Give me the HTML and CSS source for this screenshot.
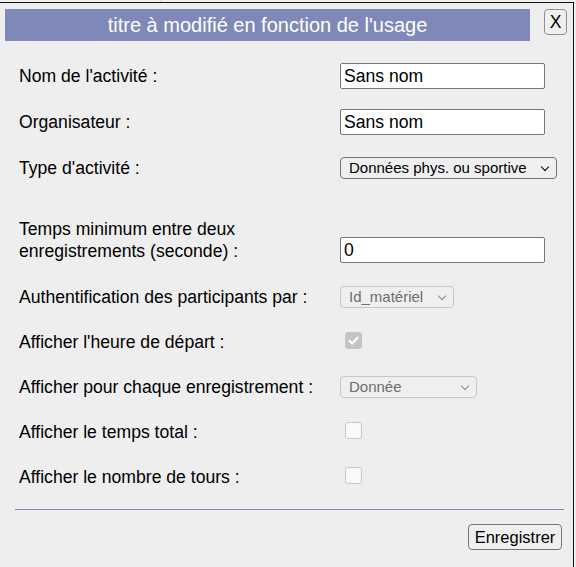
FILE: index.html
```html
<!DOCTYPE html>
<html lang="fr">
<head>
<meta charset="utf-8">
<title>Activité</title>
<link rel="stylesheet" href="styles.css">
</head>
<body>
<div class="topstrip"><span class="tick"></span></div>
<div class="dialog">
  <div class="header">
    <div class="title">titre à modifié en fonction de l'usage</div>
    <button class="close">X</button>
  </div>
  <form class="form">
    <div class="row">
      <label class="lbl">Nom de l'activité :</label>
      <input class="txt" type="text" value="Sans nom">
    </div>
    <div class="row">
      <label class="lbl">Organisateur :</label>
      <input class="txt" type="text" value="Sans nom">
    </div>
    <div class="row">
      <label class="lbl">Type d'activité :</label>
      <div class="sel sel-type">Données phys. ou sportive<span class="chev"></span></div>
    </div>
    <div class="row row-two">
      <label class="lbl lbl-two">Temps minimum entre deux enregistrements (seconde) :</label>
      <input class="txt" type="text" value="0">
    </div>
    <div class="row row-s">
      <label class="lbl">Authentification des participants par :</label>
      <div class="sel sel-dis sel-id">Id_matériel<span class="chev"></span></div>
    </div>
    <div class="row row-s">
      <label class="lbl">Afficher l'heure de départ :</label>
      <span class="cb cb-checked"><svg viewBox="0 0 17 17" width="17" height="17"><path d="M4.5 8.8 L7.3 11.5 L12.6 5.6" fill="none" stroke="#fff" stroke-width="2.2" stroke-linecap="round" stroke-linejoin="round"/></svg></span>
    </div>
    <div class="row row-s">
      <label class="lbl">Afficher pour chaque enregistrement :</label>
      <div class="sel sel-dis sel-don">Donnée<span class="chev"></span></div>
    </div>
    <div class="row row-s">
      <label class="lbl">Afficher le temps total :</label>
      <span class="cb"></span>
    </div>
    <div class="row row-s">
      <label class="lbl">Afficher le nombre de tours :</label>
      <span class="cb"></span>
    </div>
    <div class="sep"></div>
    <div class="footer">
      <button type="button" class="save">Enregistrer</button>
    </div>
  </form>
</div>
</body>
</html>
```
FILE: styles.css
```css
html, body {
  margin: 0;
  padding: 0;
}
body {
  background: #f0f0f0;
  font-family: "Liberation Sans", Arial, sans-serif;
  width: 576px;
  height: 567px;
  overflow: hidden;
}
.topstrip {
  height: 2px;
  position: relative;
}
.topstrip .tick {
  position: absolute;
  left: 161px;
  top: 0;
  width: 1px;
  height: 2px;
  background: #c8c8c8;
}
.dialog {
  width: 574px;
  height: 570px;
  background: #eeeeee;
  border-top: 1px solid #111;
  border-right: 1px solid #111;
  box-sizing: border-box;
}
.header {
  display: flex;
  align-items: flex-start;
  padding-top: 6px;
}
.title {
  margin-left: 5px;
  width: 525px;
  height: 32px;
  background: #7f89b8;
  color: #fff;
  font-size: 20px;
  line-height: 32px;
  text-align: center;
}
.close {
  margin-left: 14px;
  width: 23px;
  height: 26px;
  padding: 0;
  border: 1px solid #8f8f8f;
  border-radius: 4px;
  background: #efefef;
  font-family: "Liberation Sans", Arial, sans-serif;
  font-size: 17.6px;
  color: #000;
  line-height: 24px;
}
.form {
  margin: 12px 0 0 0;
}
.row {
  display: flex;
  align-items: center;
  height: 46px;
}
.row-s {
  height: 45px;
}
.lbl {
  width: 340px;
  padding-left: 19px;
  box-sizing: border-box;
  flex: none;
  font-size: 17.6px;
  color: #000;
  line-height: 22px;
}
.row-two {
  align-items: flex-end;
  height: auto;
  margin-top: 27px;
  padding-bottom: 11px;
}
.lbl-two {
  margin-bottom: 1px;
  padding-right: 80px;
}
.txt {
  width: 205px;
  height: 26px;
  box-sizing: border-box;
  margin: 0;
  border: 1px solid #767676;
  border-radius: 2px;
  background: #fff;
  padding: 0 3px;
  font-family: "Liberation Sans", Arial, sans-serif;
  font-size: 17.6px;
  color: #000;
  outline: none;
}
.sel {
  position: relative;
  height: 22px;
  box-sizing: border-box;
  border: 1px solid #767676;
  border-radius: 4px;
  background: #efefef;
  font-size: 15px;
  line-height: 20px;
  padding-left: 8px;
  color: #000;
}
.sel-type { width: 217px; }
.sel-id { width: 114px; }
.sel-don { width: 137px; }
.sel-dis {
  border-color: #c6c6c6;
  color: #6d6d6d;
  background: #efefef;
}
.chev {
  position: absolute;
  right: 8px;
  top: 6px;
  width: 5px;
  height: 5px;
  border-right: 1.6px solid #000;
  border-bottom: 1.6px solid #000;
  transform: rotate(45deg);
}
.sel-dis .chev {
  border-color: #8a8a8a;
  border-width: 1.2px;
}
.cb {
  display: inline-block;
  width: 17px;
  height: 17px;
  box-sizing: border-box;
  margin-left: 5px;
  margin-top: -2px;
  border: 1px solid #c8c8c8;
  border-radius: 3px;
  background: #f9f9f9;
}
.cb svg { display: block; margin: -1px; }
.cb-checked {
  background: #c4c4c4;
  border-color: #c4c4c4;
}
.sep {
  margin: 10px 9px 0 15px;
  height: 1px;
  background: #7f89b8;
}
.footer {
  display: flex;
  justify-content: flex-end;
  padding: 14px 11px 0 0;
}
.save {
  width: 94px;
  height: 26px;
  padding: 0;
  border: 1px solid #767676;
  border-radius: 4px;
  background: #efefef;
  font-family: "Liberation Sans", Arial, sans-serif;
  font-size: 16.5px;
  color: #000;
}
```
